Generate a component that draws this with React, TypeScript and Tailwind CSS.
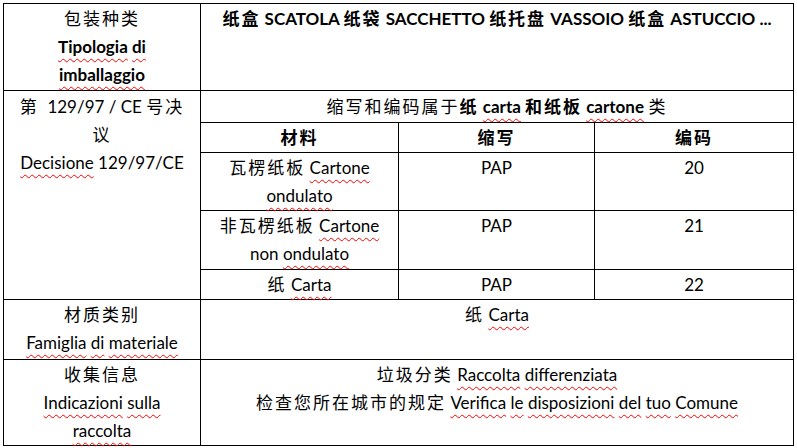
import React from "react";

const U = ({ children }: { children: React.ReactNode }) => (
  <span className="underline decoration-wavy decoration-[#ff0000] decoration-1 underline-offset-[5px]">{children}</span>
);

const C = ({ children }: { children: React.ReactNode }) => <span className="tracking-[2px]">{children}</span>;

const L = ({ children }: { children: React.ReactNode }) => <div className="whitespace-nowrap">{children}</div>;

const td = "border border-black align-top text-center p-0 pt-[1px]";

export default function App() {
  return (
    <div className="w-[797px] h-[448px] bg-white pt-[3px] pl-[3px] text-black text-[17px] leading-[28px] [font-family:Lato,'Noto_Sans_CJK_SC',sans-serif]">
      <table className="border-collapse table-fixed w-[790px]">
        <colgroup>
          <col className="w-[197px]" />
          <col className="w-[198px]" />
          <col className="w-[196px]" />
          <col className="w-[199px]" />
        </colgroup>
        <tbody>
          <tr className="h-[87px]">
            <td className={td}>
              <L><C>包装种类</C></L>
              <L><span className="font-bold"><U>Tipologia</U> <U>di</U></span></L>
              <L><span className="font-bold"><U>imballaggio</U></span></L>
            </td>
            <td className={td + " font-bold"} colSpan={3}>
              <L><C>纸盒</C> SCATOLA <C>纸袋</C> SACCHETTO <C>纸托盘</C> VASSOIO <C>纸盒</C> ASTUCCIO ...</L>
            </td>
          </tr>
          <tr className="h-[32px]">
            <td className={td + " pt-[2px]"} rowSpan={5}>
              <L><C>第</C>&nbsp; 129/97 / CE <C>号决</C></L>
              <L><C>议</C></L>
              <L><U>Decisione</U> 129/97/CE</L>
            </td>
            <td className={td + " pt-[2px]"} colSpan={3}>
              <L>
                <C>缩写和编码属于</C><span className="font-bold"><C>纸</C> <U>carta</U> <C>和纸板</C> <U>cartone</U></span> <C>类</C>
              </L>
            </td>
          </tr>
          <tr className="h-[29px]">
            <td className={td + " font-bold pt-0"}><C>材料</C></td>
            <td className={td + " font-bold pt-0"}><C>缩写</C></td>
            <td className={td + " font-bold pt-0"}><C>编码</C></td>
          </tr>
          <tr className="h-[58px]">
            <td className={td}>
              <L><C>瓦楞纸板</C> <U>Cartone</U></L>
              <L><U>ondulato</U></L>
            </td>
            <td className={td}>PAP</td>
            <td className={td}>20</td>
          </tr>
          <tr className="h-[59px]">
            <td className={td}>
              <L><C>非瓦楞纸板</C> <U>Cartone</U></L>
              <L>non <U>ondulato</U></L>
            </td>
            <td className={td}>PAP</td>
            <td className={td}>21</td>
          </tr>
          <tr className="h-[30px]">
            <td className={td}>
              <L><C>纸</C> <U>Carta</U></L>
            </td>
            <td className={td}>PAP</td>
            <td className={td}>22</td>
          </tr>
          <tr className="h-[60px]">
            <td className={td}>
              <L><C>材质类别</C></L>
              <L><U>Famiglia</U> <U>di</U> <U>materiale</U></L>
            </td>
            <td className={td} colSpan={3}>
              <L><C>纸</C> <U>Carta</U></L>
            </td>
          </tr>
          <tr className="h-[86px]">
            <td className={td}>
              <L><C>收集信息</C></L>
              <L><U>Indicazioni</U> <U>sulla</U></L>
              <L><U>raccolta</U></L>
            </td>
            <td className={td} colSpan={3}>
              <L><C>垃圾分类</C> <U>Raccolta</U> <U>differenziata</U></L>
              <L><C>检查您所在城市的规定</C> <U>Verifica</U> <U>le</U> <U>disposizioni</U> <U>del</U> <U>tuo</U> <U>Comune</U></L>
            </td>
          </tr>
        </tbody>
      </table>
    </div>
  );
}
